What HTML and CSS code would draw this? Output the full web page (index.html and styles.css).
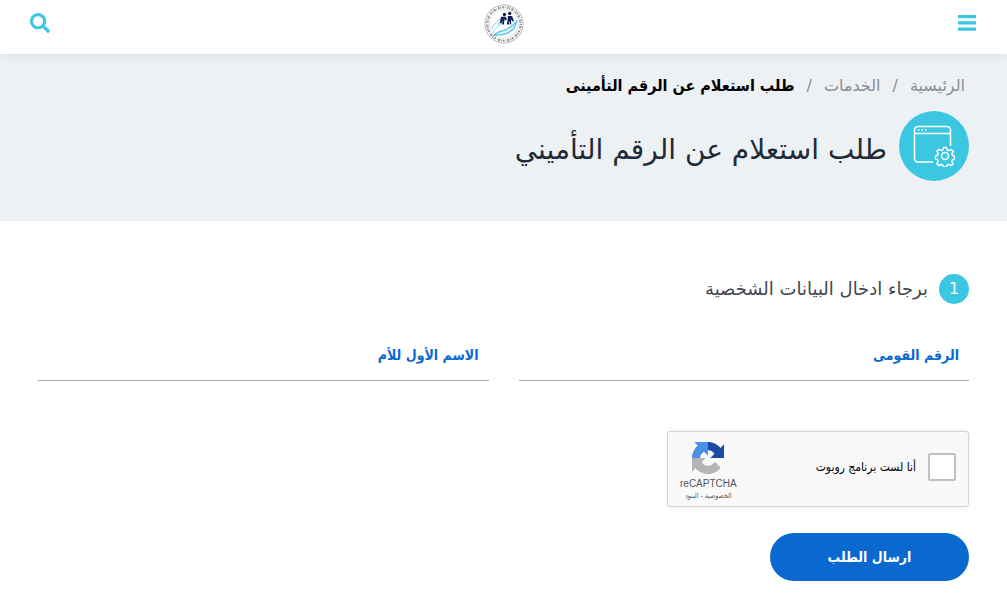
FILE: index.html
```html
<!DOCTYPE html>
<html lang="ar" dir="rtl">
<head>
    <meta charset="UTF-8">
    <meta name="viewport" content="width=device-width, initial-scale=1">
    <title>طلب استعلام عن الرقم التأميني</title>
    <link rel="stylesheet" href="styles.css">
</head>
<body>
    <header class="site-header">
        <button type="button" class="icon-btn" aria-label="القائمة">
            <svg width="18" height="18" viewBox="0 0 18 18" fill="#3bc6e2">
                <rect x="0" y="1" width="18" height="3.200" rx=".5"/>
                <rect x="0" y="7.300" width="18" height="3.200" rx=".5"/>
                <rect x="0" y="13.600" width="18" height="3.200" rx=".5"/>
            </svg>
        </button>
        <a href="#" class="logo" aria-label="الصفحة الرئيسية">
            <svg width="40" height="42" viewBox="0 0 84 84" fill="none">
                <circle cx="42" cy="42" r="40" stroke="#999" stroke-width="1.500"/>
                <circle cx="42" cy="42" r="35" stroke="#888" stroke-width="5" stroke-dasharray="2 2.500 4 2 1 3 3 2"/>
                <circle cx="42" cy="42" r="30" stroke="#bbb" stroke-width="1"/>
                <path d="M17 52c3-11 11-16 18-21l3 2-8 10c5-3 9-7 12-9-3 7-8 10-14 15-5 4-8 7-9 11" stroke="#6fcbea" stroke-width="2"/>
                <path d="M21 66c7-7 11-9 20-10 9-3 17-8 27-19-2 14-11 22-24 26-9 3-15 1-23 3z" fill="#e4f7fd" stroke="#4cc0e8" stroke-width="2.500"/>
                <g fill="#12204f">
                    <circle cx="43" cy="22" r="3.500"/>
                    <circle cx="54" cy="20" r="3.500"/>
                    <path d="M36 27h10l2 5-2 3-3-3-1 11h-4l1-9-3 7-3-2 2-8z"/>
                    <path d="M50 25h9l4 11-3 1-3-5v11h-3v-9l-2 9h-4l2-12z"/>
                </g>
            </svg>
        </a>
        <button type="button" class="icon-btn" aria-label="بحث">
            <svg width="20" height="20" viewBox="0 0 512 512" fill="#3bc6e2">
                <path d="M505 442.7L405.3 343c-4.5-4.5-10.6-7-17-7H372c27.6-35.3 44-79.7 44-128C416 93.1 322.9 0 208 0S0 93.1 0 208s93.1 208 208 208c48.3 0 92.7-16.4 128-44v16.3c0 6.4 2.5 12.5 7 17l99.7 99.7c9.4 9.4 24.6 9.4 33.9 0l28.3-28.3c9.4-9.4 9.4-24.6.1-34zM208 336c-70.7 0-128-57.2-128-128 0-70.7 57.2-128 128-128 70.7 0 128 57.2 128 128 0 70.7-57.2 128-128 128z"/>
            </svg>
        </button>
    </header>

    <section class="page-banner">
        <nav class="breadcrumb">
            <a href="#">الرئيسية</a>
            <span>/</span>
            <a href="#">الخدمات</a>
            <span>/</span>
            <strong>طلب استعلام عن الرقم التأمينى</strong>
        </nav>
        <div class="page-title">
            <div class="service-icon">
                <svg width="42" height="42" viewBox="0 0 42 42" fill="none" stroke="#fff" stroke-width="1.5">
                    <path d="M20 37H5a3.500 3.500 0 0 1-3.500-3.500V5A3.500 3.500 0 0 1 5 1.500h29A3.500 3.500 0 0 1 37.500 5v16M1.500 8.500h36"/>
                    <path d="M5 5h1.500M8.500 5H10M12 5h1.500"/>
                    <g transform="translate(0 -1)">
                        <circle cx="32" cy="32" r="3.500"/>
                        <path d="M30.500 23.500h3l.7 2.500 1.600.7 2.300-1.300 2 2-1.200 2.400.7 1.600 1.900.7v2.800l-2 .8-.7 1.600 1.300 2.300-2 2-2.400-1.200-1.500.6-.8 2h-2.800l-.8-2-1.600-.7-2.300 1.300-2-2 1.200-2.400-.6-1.600-2-.7v-2.900l2-.7.7-1.600-1.300-2.400 2-2 2.400 1.300 1.600-.7z" stroke-linejoin="round"/>
                    </g>
                </svg>
            </div>
            <h1>طلب استعلام عن الرقم التأميني</h1>
        </div>
    </section>

    <main>
        <form class="request-form">
            <h2 class="step-title"><span class="step-number">1</span>برجاء ادخال البيانات الشخصية</h2>
            <div class="fields">
                <div class="field">
                    <label for="national-id">الرقم القومى</label>
                    <input type="text" id="national-id">
                </div>
                <div class="field">
                    <label for="mother-name">الاسم الأول للأم</label>
                    <input type="text" id="mother-name">
                </div>
            </div>
            <div class="captcha">
                <input type="checkbox" id="not-robot">
                <label for="not-robot">أنا لست برنامج روبوت</label>
                <div class="captcha-brand">
                    <svg width="32" height="32" viewBox="0 0 64 64">
                        <path fill="#1c4aa9" d="M64 31.955l-.033-1.37V4.687l-7.16 7.16C50.948 4.674 42.033.093 32.05.093c-10.4 0-19.622 4.96-25.458 12.64l11.736 11.86a15.550 15.550 0 0 1 4.754-5.334c2.050-1.600 4.952-2.906 8.968-2.906.485 0 .860.057 1.135.163 4.976.393 9.288 3.140 11.828 7.124l-8.307 8.307L64 31.953"/>
                        <path fill="#4a90e8" d="M31.862.094l-1.370.033H4.594l7.160 7.160C4.580 13.147 0 22.060 0 32.046c0 10.400 4.960 19.622 12.640 25.458L24.500 45.768a15.550 15.550 0 0 1-5.334-4.754c-1.600-2.050-2.906-4.952-2.906-8.968 0-.485.057-.860.163-1.135.393-4.976 3.140-9.288 7.124-11.828l8.307 8.307L31.860.095"/>
                        <path fill="#b4b4b4" d="M.001 32.045l.033 1.370v25.898l7.160-7.160c5.860 7.173 14.774 11.754 24.760 11.754 10.400 0 19.622-4.960 25.458-12.640l-11.736-11.860a15.550 15.550 0 0 1-4.754 5.334c-2.050 1.600-4.952 2.906-8.968 2.906-.485 0-.860-.057-1.135-.163-4.976-.393-9.288-3.140-11.828-7.124l8.307-8.307c-10.522.040-22.400.066-27.295-.005"/>
                    </svg>
                    <span class="captcha-name">reCAPTCHA</span>
                    <span class="captcha-links"><a href="#">الخصوصية</a> - <a href="#">البنود</a></span>
                </div>
            </div>
            <button type="submit" class="submit-btn">ارسال الطلب</button>
        </form>
    </main>
</body>
</html>
```

FILE: styles.css
```css
* {
    box-sizing: border-box;
}

body {
    margin: 0;
    background-color: #fff;
    font-family: "DejaVu Sans", sans-serif;
    color: #212b38;
}

a {
    color: inherit;
    text-decoration: none;
}

svg {
    display: block;
}

/* header */
.site-header {
    position: relative;
    display: flex;
    justify-content: space-between;
    align-items: flex-start;
    height: 54px;
    padding: 3px 31px 3px 30px;
    background-color: #fff;
    box-shadow: 0 2px 10px rgba(0, 0, 0, 0.08);
}

.icon-btn {
    display: flex;
    align-items: center;
    height: 40px;
    padding: 0;
    border: none;
    background: none;
    cursor: pointer;
}

/* banner */
.page-banner {
    padding: 18px 38px 40px;
    background-color: #eef1f4;
}

.breadcrumb {
    display: flex;
    gap: 12px;
    padding: 0 4px;
    font-size: 16px;
    line-height: 28px;
    color: #8a8d91;
}

.breadcrumb strong {
    font-family: "DejaVu Sans Condensed", "DejaVu Sans", sans-serif;
    color: #000;
}

.page-title {
    display: flex;
    align-items: center;
    gap: 12px;
    margin-top: 11px;
}

.page-title h1 {
    margin: 0;
    padding-top: 8px;
    font-size: 28px;
    font-weight: normal;
    line-height: 40px;
}

.service-icon {
    display: flex;
    justify-content: center;
    align-items: center;
    width: 70px;
    height: 70px;
    border-radius: 50%;
    background-color: #3bc6e2;
}

/* form */
.request-form {
    display: flex;
    flex-direction: column;
    align-items: flex-start;
    padding: 53px 38px 30px;
}

.step-title {
    display: flex;
    align-items: center;
    gap: 11px;
    margin: 0;
    font-size: 18px;
    font-weight: normal;
    line-height: 30px;
    color: #41464d;
}

.step-number {
    width: 30px;
    height: 30px;
    border-radius: 50%;
    background-color: #3bc6e2;
    color: #fff;
    font-size: 16px;
    text-align: center;
}

.fields {
    display: grid;
    grid-template-columns: 1fr 1fr;
    gap: 30px;
    width: 100%;
    margin-top: 27px;
}

/* label and input share one cell */
.field {
    display: grid;
}

.field label,
.field input {
    grid-area: 1 / 1;
}

.field label {
    padding: 0 10px;
    font-family: "DejaVu Sans Condensed", "DejaVu Sans", sans-serif;
    font-size: 14px;
    font-weight: bold;
    line-height: 48px;
    color: #0a69cf;
}

.field input {
    width: 100%;
    height: 50px;
    padding: 0 10px;
    border: none;
    border-bottom: 1px solid #a9a9a9;
    background: none;
    font: inherit;
}

.captcha {
    display: flex;
    align-items: center;
    width: 302px;
    height: 76px;
    margin-top: 50px;
    padding: 0 12px 4px;
    border: 1px solid #d3d3d3;
    border-radius: 3px;
    background-color: #f9f9f9;
    box-shadow: 0 0 4px rgba(0, 0, 0, 0.08);
}

.captcha input {
    appearance: none;
    width: 28px;
    height: 28px;
    margin: 0;
    border: 2px solid #c1c1c1;
    border-radius: 2px;
    background-color: #fff;
}

.captcha label {
    margin-right: 12px;
    font-family: "DejaVu Sans Condensed", "DejaVu Sans", sans-serif;
    font-size: 12px;
    color: #000;
}

.captcha-brand {
    display: flex;
    flex-direction: column;
    align-items: center;
    margin-right: auto;
    padding-top: 8px;
    font-family: "Liberation Sans", "DejaVu Sans Condensed", sans-serif;
    color: #555;
}

.captcha-name {
    margin-top: 3px;
    font-size: 10px;
    line-height: 14px;
}

.captcha-links {
    font-size: 7px;
    line-height: 10px;
}

.submit-btn {
    width: 199px;
    height: 48px;
    margin-top: 26px;
    border: none;
    border-radius: 24px;
    background-color: #0a69cf;
    color: #fff;
    font-family: "DejaVu Sans Condensed", "DejaVu Sans", sans-serif;
    font-size: 14px;
    font-weight: bold;
    cursor: pointer;
}
```
